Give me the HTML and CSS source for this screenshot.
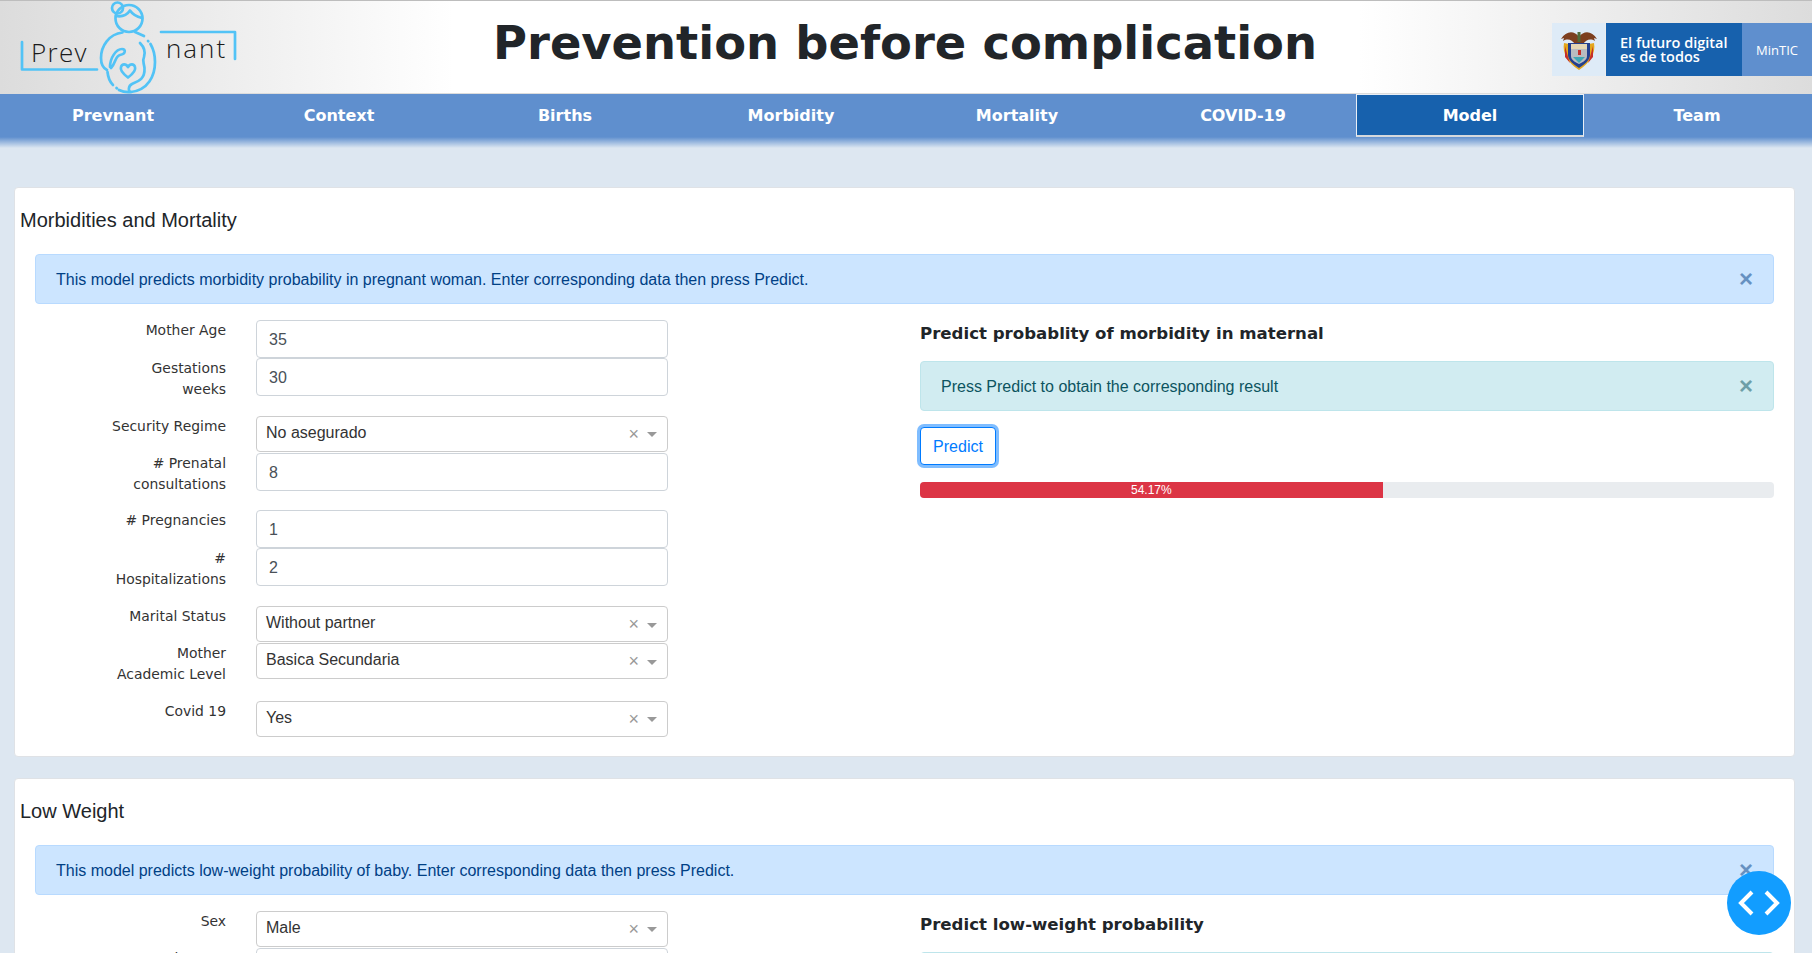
FILE: index.html
```html
<!DOCTYPE html>
<html lang="en">

<head>
    <meta charset="UTF-8">
    <meta name="viewport" content="width=device-width, initial-scale=1.0">
    <title>Prevnant</title>
    <link rel="stylesheet" href="styles.css">
</head>

<body>
    <header class="top">
        <svg class="logo" width="250" height="94" viewBox="0 0 250 94">
            <g fill="none" stroke="#52c3f6" stroke-width="2.7" stroke-linecap="round" stroke-linejoin="round">
                <path d="M22 42V69.500H97" />
                <path d="M161 32H235V59" />
                <circle cx="129" cy="18.500" r="13.500" />
                <circle cx="117.500" cy="8" r="5.500" />
                <path d="M116 16C122 17 127 15 130 10.500C133 15 138 17 142 18" />
                <path d="M122.500 32.500C109 34 101 46 101 58C101 63 103 68 107 70" />
                <path d="M107.500 72C108 77 110 82 113 85" />
                <path d="M116.500 88L117 88.300" />
                <path d="M119 90C123 92 127 92.500 131 92C148 90 155 76 155 62C155 56 154 50 150.500 44" />
                <path d="M135 32L144 36" />
                <path d="M148 41L148.300 41.300" />
                <path d="M131 92C128 92 128 86 132 84C139 81 145 79 144.500 68C144 63 142 61 144 57C145 54 146 49 140 43" />
                <path d="M110 67C110 58 116 49 122 49C126 49 126 54 120 55C115 56 116 63 111 68" />
                <path d="M128 77.500C122 73 120 70 121 67C122 63.500 126 63.500 128 67C130 63.500 134 63.500 135 67C136 70 134 73 128 77.500Z" />
            </g>
            <text class="logo-word" x="31" y="62" letter-spacing="1.300">Prev</text>
            <text class="logo-word" x="166" y="58" letter-spacing="2">nant</text>
        </svg>
        <h1 class="top-title">Prevention before complication</h1>
        <div class="gov">
            <div class="gov-arms">
                <svg width="40" height="42" viewBox="0 0 40 42">
                    <path d="M20 8C15 1 7 2 2 10L5 9L4 12C9 9 13 11 16 15H24C27 11 31 9 36 12L35 9L38 10C33 2 25 1 20 8Z" fill="#7d3f1f" />
                    <path d="M18.500 3h3v10h-3z" fill="#4f6b3a" />
                    <path d="M5 14C3 24 9 34 20 41C31 34 37 24 35 14L30 15C32 24 27 31 20 35C13 31 8 24 10 15Z" fill="#e4a71c" />
                    <path d="M9 14H31V26C31 31 26 35 20 39C14 35 9 31 9 26Z" fill="#23408f" />
                    <path d="M12 15H28V27C28 31 24 33 20 35C16 33 12 31 12 27Z" fill="#b9bcc0" />
                    <path d="M12 15H28V20H12z" fill="#e3d6b5" />
                    <path d="M14 28H26L20 34Z" fill="#3fa7b5" />
                    <path d="M19 21h3v5h-3z" fill="#c62f2a" />
                    <path d="M6 17l3 11 2 6-5-6z" fill="#c62f2a" />
                    <path d="M34 17l-3 11-2 6 5-6z" fill="#c62f2a" />
                </svg>
            </div>
            <div class="gov-slogan">El futuro digital<br>es de todos</div>
            <div class="gov-min">MinTIC</div>
        </div>
    </header>

    <nav class="tabs">
        <a class="tab">Prevnant</a>
        <a class="tab">Context</a>
        <a class="tab">Births</a>
        <a class="tab">Morbidity</a>
        <a class="tab">Mortality</a>
        <a class="tab">COVID-19</a>
        <a class="tab tab-active">Model</a>
        <a class="tab">Team</a>
    </nav>

    <main class="content">
        <section class="card">
            <h2 class="card-title">Morbidities and Mortality</h2>
            <div class="alert alert-blue">
                <span>This model predicts morbidity probability in pregnant woman. Enter corresponding data then press Predict.</span>
                <span class="close">×</span>
            </div>
            <div class="columns">
                <div class="form">
                    <div class="row">
                        <label>Mother Age</label>
                        <input class="field" type="text" value="35">
                    </div>
                    <div class="row">
                        <label>Gestations<br>weeks</label>
                        <input class="field" type="text" value="30">
                    </div>
                    <div class="row">
                        <label>Security Regime</label>
                        <div class="select"><span>No asegurado</span><i class="clear">×</i><i class="caret"></i></div>
                    </div>
                    <div class="row">
                        <label># Prenatal<br>consultations</label>
                        <input class="field" type="text" value="8">
                    </div>
                    <div class="row">
                        <label># Pregnancies</label>
                        <input class="field" type="text" value="1">
                    </div>
                    <div class="row">
                        <label>#<br>Hospitalizations</label>
                        <input class="field" type="text" value="2">
                    </div>
                    <div class="row">
                        <label>Marital Status</label>
                        <div class="select"><span>Without partner</span><i class="clear">×</i><i class="caret"></i></div>
                    </div>
                    <div class="row">
                        <label>Mother<br>Academic Level</label>
                        <div class="select"><span>Basica Secundaria</span><i class="clear">×</i><i class="caret"></i></div>
                    </div>
                    <div class="row">
                        <label>Covid 19</label>
                        <div class="select"><span>Yes</span><i class="clear">×</i><i class="caret"></i></div>
                    </div>
                </div>
                <div class="result">
                    <h3 class="result-title">Predict probablity of morbidity in maternal</h3>
                    <div class="alert alert-teal">
                        <span>Press Predict to obtain the corresponding result</span>
                        <span class="close">×</span>
                    </div>
                    <button class="btn-predict">Predict</button>
                    <div class="progress">
                        <div class="progress-bar" style="width: 54.17%">54.17%</div>
                    </div>
                </div>
            </div>
        </section>

        <section class="card">
            <h2 class="card-title">Low Weight</h2>
            <div class="alert alert-blue">
                <span>This model predicts low-weight probability of baby. Enter corresponding data then press Predict.</span>
                <span class="close">×</span>
            </div>
            <div class="columns">
                <div class="form">
                    <div class="row">
                        <label>Sex</label>
                        <div class="select"><span>Male</span><i class="clear">×</i><i class="caret"></i></div>
                    </div>
                    <div class="row">
                        <label>Gestation age</label>
                        <input class="field" type="text" value="38">
                    </div>
                </div>
                <div class="result">
                    <h3 class="result-title">Predict low-weight probability</h3>
                    <div class="alert alert-teal">
                        <span>Press Predict to obtain the corresponding result</span>
                        <span class="close">×</span>
                    </div>
                </div>
            </div>
        </section>
    </main>

    <div class="fab">
        <svg width="42" height="28" viewBox="0 0 42 28" fill="none" stroke="#fff" stroke-width="4">
            <path d="M14 3L3 14L14 25" />
            <path d="M28 3L39 14L28 25" />
        </svg>
    </div>
</body>

</html>
```

FILE: styles.css
```css
html,
body {
    height: 953px;
    overflow: hidden;
}

body {
    margin: 0;
    padding: 0;
    background-color: #dde7f1;
    font-family: "Liberation Sans", Arial, sans-serif;
    font-size: 16px;
    color: #212529;
}

/* top banner */
.top {
    height: 94px;
    box-sizing: border-box;
    display: flex;
    align-items: flex-start;
    border-top: 1px solid #bdbdbd;
    border-bottom: 1px solid #dcdcdc;
    background: linear-gradient(to right, #dcdcdc 0%, #ffffff 25%, #ffffff 75%, #dcdcdc 100%);
}

.logo {
    flex: none;
    margin-top: -1px;
}

.logo-word {
    font-family: "Open Sans", sans-serif;
    font-weight: 300;
    font-size: 26px;
    fill: #1a1a1a;
}

.top-title {
    flex: 1;
    margin: 14px 0 0;
    padding-left: 8px;
    text-align: center;
    font-family: "DejaVu Sans", sans-serif;
    font-size: 46.4px;
    font-weight: bold;
    line-height: 56px;
    color: #212529;
}

.gov {
    flex: none;
    display: flex;
    width: 260px;
    height: 53px;
    margin-top: 22px;
    color: white;
}

.gov-arms {
    width: 53px;
    margin-right: 1px;
    display: flex;
    align-items: center;
    justify-content: center;
    background-color: #deebf7;
}

.gov-slogan {
    width: 136px;
    box-sizing: border-box;
    padding: 13px 0 0 14px;
    background-color: #1761ad;
    font-family: "Open Sans", sans-serif;
    font-size: 14.5px;
    font-weight: 600;
    line-height: 14px;
}

.gov-min {
    flex: 1;
    padding-top: 18px;
    text-align: center;
    background-color: #5f8fce;
    font-family: "Open Sans", sans-serif;
    font-size: 13px;
}

/* navigation */
.tabs {
    display: flex;
    padding-right: 2px;
    padding-bottom: 11px;
    background: linear-gradient(to bottom, #5f8fce 0, #5f8fce 43px, #dde7f1 54px);
}

.tab {
    flex: 1;
    height: 43px;
    box-sizing: border-box;
    text-align: center;
    font-family: "DejaVu Sans", sans-serif;
    font-size: 16px;
    font-weight: bold;
    line-height: 44px;
    color: white;
}

.tab-active {
    background-color: #1761ad;
    border: 1px solid #e8eef6;
    border-bottom: 2px solid #d4d8dd;
    line-height: 42px;
}

/* cards */
.content {
    padding: 39px 17px 0 14px;
}

.card {
    background-color: white;
    border: 1px solid #dfe2e6;
    border-radius: 4px;
    margin-bottom: 21px;
    padding: 0 20px 18px 20px;
}

.card-title {
    margin: 0 0 0 -15px;
    padding: 20px 0 0;
    height: 46px;
    font-size: 20px;
    font-weight: normal;
    line-height: 24px;
    color: #212529;
}

.alert {
    display: flex;
    justify-content: space-between;
    align-items: center;
    height: 50px;
    box-sizing: border-box;
    padding: 2px 20px 0;
    border: 1px solid transparent;
    border-radius: 4px;
    line-height: 24px;
}

.alert-blue {
    color: #004085;
    background-color: #cce5ff;
    border-color: #b8daff;
}

.alert-teal {
    color: #0c5460;
    background-color: #d1ecf1;
    border-color: #bee5eb;
}

.close {
    margin-top: -2px;
    font-size: 24px;
    font-weight: bold;
    line-height: 1;
    opacity: 0.5;
}

.columns {
    display: flex;
    margin-top: 16px;
}

/* form */
.form {
    width: 885px;
    flex: none;
}

.row {
    display: flex;
    align-items: flex-start;
}

.row label {
    width: 191px;
    padding-bottom: 16px;
    margin-right: 30px;
    text-align: right;
    font-family: "DejaVu Sans", sans-serif;
    font-size: 13.92px;
    line-height: 20.88px;
    color: #333;
}

.field,
.select {
    width: 412px;
    box-sizing: border-box;
    border: 1px solid #ced4da;
    border-radius: 4px;
    background-color: white;
}

.field {
    height: 38px;
    padding: 2px 12px 0;
    font-family: "Liberation Sans", Arial, sans-serif;
    font-size: 16px;
    color: #495057;
}

.select {
    height: 36px;
    display: flex;
    align-items: center;
    padding: 0 10px 0 9px;
    border-color: #ccc;
    color: #333;
}

.select span {
    flex: 1;
    margin-top: -2px;
}

.clear {
    font-style: normal;
    font-size: 18px;
    line-height: 1;
    color: #999;
}

.caret {
    width: 0;
    height: 0;
    margin: 2px 0 0 8px;
    border-style: solid;
    border-width: 5px 5px 0;
    border-color: #999 transparent transparent;
}

/* result column */
.result {
    width: 854px;
    flex: none;
}

.result-title {
    margin: 0;
    height: 41px;
    padding-top: 2px;
    box-sizing: border-box;
    font-family: "DejaVu Sans", sans-serif;
    font-size: 16.6px;
    font-weight: bold;
    line-height: 24px;
}

.btn-predict {
    display: block;
    width: 76px;
    height: 38px;
    margin-top: 16px;
    padding: 2px 0 0;
    background-color: white;
    border: 1px solid #007bff;
    border-radius: 4px;
    box-shadow: 0 0 0 3px rgba(0, 123, 255, 0.5);
    font-family: "Liberation Sans", Arial, sans-serif;
    font-size: 16px;
    color: #007bff;
}

.progress {
    height: 16px;
    margin-top: 17px;
    background-color: #e9ecef;
    border-radius: 4px;
    overflow: hidden;
}

.progress-bar {
    height: 16px;
    background-color: #dc3545;
    color: white;
    font-size: 12px;
    line-height: 16px;
    text-align: center;
}

/* floating button */
.fab {
    position: fixed;
    left: 1727px;
    top: 871px;
    width: 64px;
    height: 64px;
    display: flex;
    align-items: center;
    justify-content: center;
    border-radius: 50%;
    background-color: #129dff;
}
```
